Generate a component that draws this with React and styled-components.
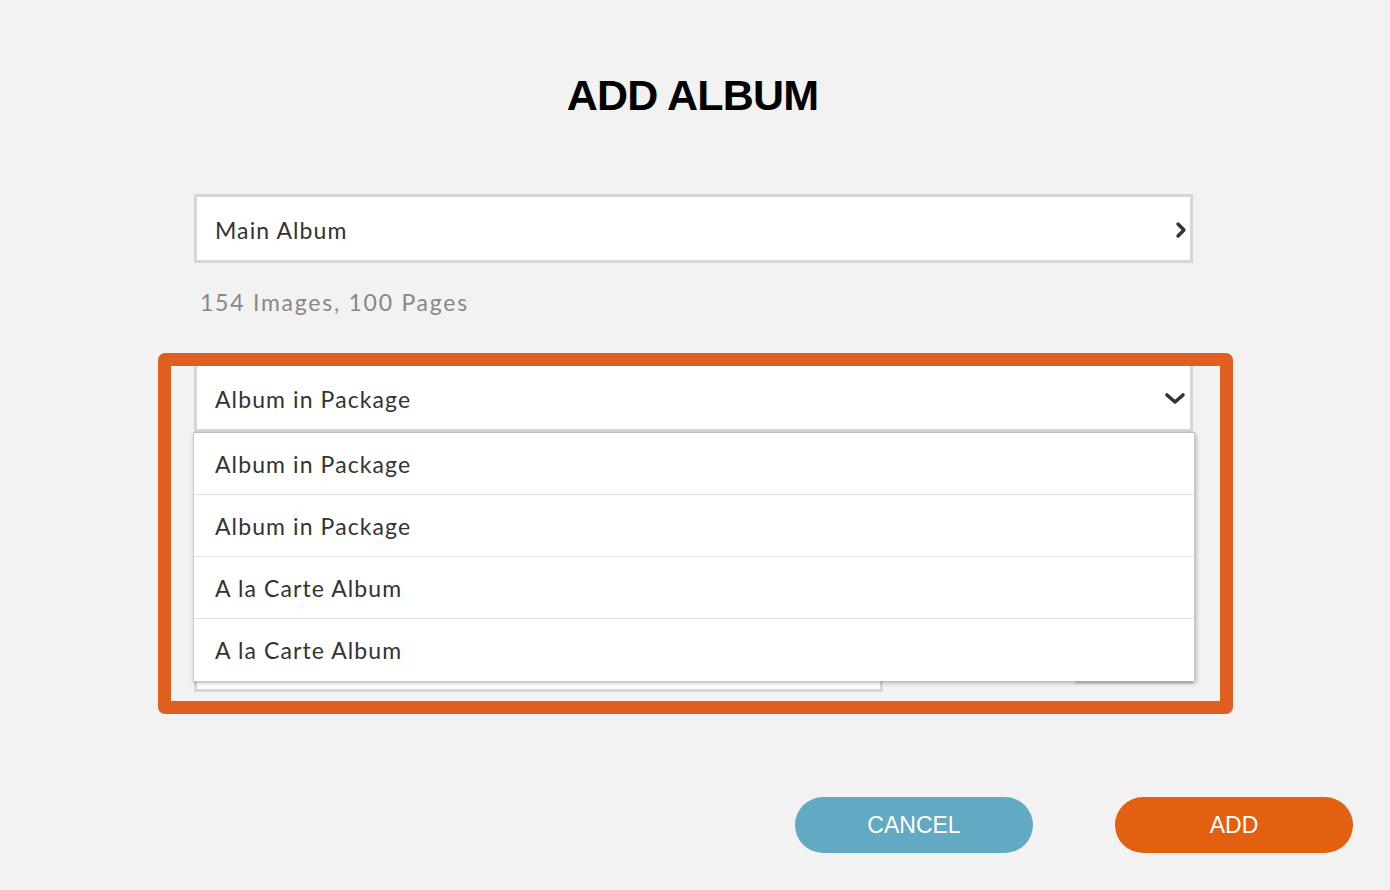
import React from "react";
import styled, { createGlobalStyle } from "styled-components";

const Global = createGlobalStyle`
  html, body { margin: 0; padding: 0; background: #f2f2f2; }
  * { box-sizing: border-box; }
`;

const Page = styled.div`
  min-height: 890px;
  background: #f2f2f2;
  padding-top: 70px;
  font-family: "Lato", "Open Sans", sans-serif;
  color: #333;
`;

const Title = styled.h1`
  margin: 0;
  padding-right: 5px;
  text-align: center;
  font-family: "Liberation Sans", Arial, sans-serif;
  font-weight: 700;
  font-size: 43px;
  line-height: 50px;
  letter-spacing: -0.8px;
  color: #000;
`;

const Form = styled.div`
  width: 999px;
  margin: 74px 0 0 194px;
  display: flex;
  flex-direction: column;
`;

const Field = styled.div`
  height: 69px;
  border: 3px solid #d6d6d6;
  background: #fff;
  display: flex;
  align-items: center;
  justify-content: space-between;
  padding: 2px ${(p) => p.$padRight || 18}px 0 18px;
  font-size: 23px;
  letter-spacing: 1.1px;
  color: #333;
`;

const Helper = styled.div`
  margin-top: 24px;
  padding-left: 6px;
  font-size: 23px;
  line-height: 30px;
  letter-spacing: 1.75px;
  color: #888;
`;

const Section = styled.div`
  position: relative;
  margin-top: 46px;
`;

const SelectWrap = styled.div`
  position: relative;
`;

const Menu = styled.ul`
  position: absolute;
  top: 100%;
  left: -1px;
  right: -2px;
  margin: 0;
  padding: 0;
  list-style: none;
  background: #fff;
  border-top: 1px solid #bdbdbd;
  border-left: 1px solid #d0d0d0;
  border-right: 1px solid #c8c8c8;
  box-shadow: 1px 2px 4px rgba(0, 0, 0, 0.28);
  z-index: 2;
`;

const Option = styled.li`
  height: 62px;
  display: flex;
  align-items: center;
  padding: 0 0 0 21px;
  font-size: 23px;
  letter-spacing: 1.1px;
  color: #333;
  border-bottom: ${(p) => (p.$last ? "none" : "1px solid #e2e2e2")};
`;

const HiddenRow = styled.div`
  display: flex;
  justify-content: space-between;
  align-items: flex-start;
  margin-top: 191px;
`;

const SmallInput = styled.div`
  width: ${(p) => p.$w}px;
  height: ${(p) => p.$h}px;
  background: #fff;
  border: 3px solid #d6d6d6;
`;

const Highlight = styled.div`
  position: absolute;
  top: -10px;
  left: -36px;
  right: -40px;
  bottom: -22px;
  border: 13px solid #df5f21;
  border-radius: 7px;
  pointer-events: none;
  z-index: 3;
`;

const Footer = styled.div`
  display: flex;
  justify-content: flex-end;
  gap: 82px;
  padding-right: 37px;
  margin-top: 105px;
`;

const Button = styled.button`
  width: 238px;
  height: 56px;
  border: none;
  border-radius: 28px;
  background: ${(p) => p.$bg};
  color: #fff;
  font-family: "Liberation Sans", Arial, sans-serif;
  font-size: 23px;
  padding-top: 1px;
  cursor: pointer;
`;

const ChevronRight = () => (
  <svg width="12" height="18" viewBox="0 0 12 18">
    <path d="M3 3 L9 9 L3 15" fill="none" stroke="#333" strokeWidth="3.4" strokeLinecap="round" strokeLinejoin="round" />
  </svg>
);

const ChevronDown = () => (
  <svg width="22" height="13" viewBox="0 0 22 13">
    <path d="M3 3 L11 10 L19 3" fill="none" stroke="#333" strokeWidth="3.6" strokeLinecap="round" strokeLinejoin="round" />
  </svg>
);

const options = ["Album in Package", "Album in Package", "A la Carte Album", "A la Carte Album"];

export default function App() {
  return (
    <>
      <Global />
      <Page>
        <Title>ADD ALBUM</Title>
        <Form>
          <Field $padRight={3}>
            <span>Main Album</span>
            <ChevronRight />
          </Field>
          <Helper>154 Images, 100 Pages</Helper>
          <Section>
            <SelectWrap>
              <Field $padRight={4}>
                <span>Album in Package</span>
                <ChevronDown />
              </Field>
              <Menu>
                {options.map((o, i) => (
                  <Option key={i} $last={i === options.length - 1}>
                    {o}
                  </Option>
                ))}
              </Menu>
            </SelectWrap>
            <HiddenRow>
              <SmallInput $w={689} $h={69} />
              <SmallInput $w={118} $h={61} />
            </HiddenRow>
            <Highlight />
          </Section>
        </Form>
        <Footer>
          <Button $bg="#62a9c4">CANCEL</Button>
          <Button $bg="#e2600f">ADD</Button>
        </Footer>
      </Page>
    </>
  );
}
